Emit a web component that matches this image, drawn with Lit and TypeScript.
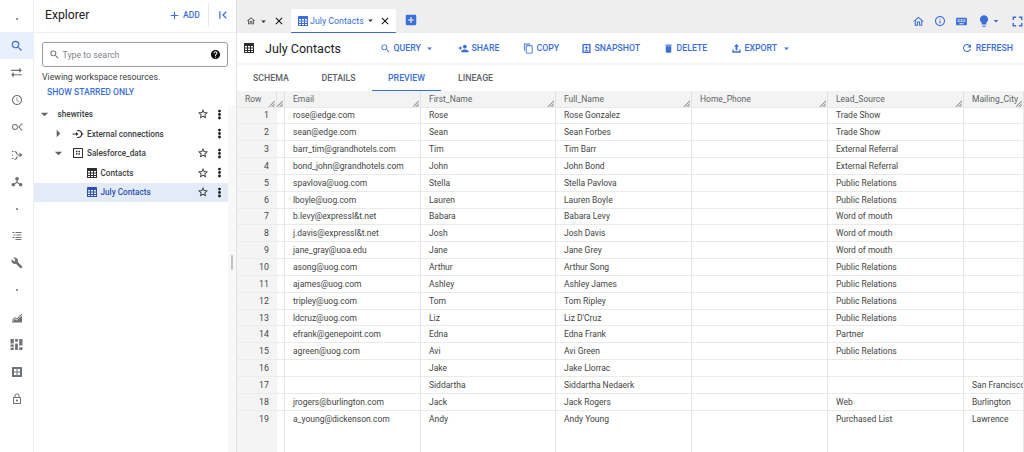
import { LitElement, html, css, svg } from "lit";
import { customElement } from "lit/decorators.js";

const P: Record<string, string> = {
  search: "M15.5 14h-.79l-.28-.27A6.471 6.471 0 0 0 16 9.5 6.5 6.5 0 1 0 9.5 16c1.61 0 3.09-.59 4.23-1.57l.27.28v.79l5 4.99L20.49 19l-4.99-5zm-6 0C7.01 14 5 11.99 5 9.5S7.01 5 9.5 5 14 7.01 14 9.5 11.99 14 9.5 14z",
  swap: "M2 7h15V3l5 5-5 5V9H2zM22 15H7v-4l-5 5 5 5v-4h15z",
  clock: "M11.99 2C6.47 2 2 6.48 2 12s4.47 10 9.99 10C17.52 22 22 17.52 22 12S17.52 2 11.99 2zM12 20c-4.42 0-8-3.58-8-8s3.58-8 8-8 8 3.58 8 8-3.58 8-8 8zm.5-13H11v6l5.25 3.15.75-1.23-4.5-2.67z",
  dot: "M12 10a2 2 0 1 0 0 4 2 2 0 0 0 0-4z",
  graph: "M8 6a6 6 0 1 0 0 12 6 6 0 0 0 0-12zm0 2a4 4 0 1 1 0 8 4 4 0 0 1 0-8zM13 11h3l4-6h3v2h-2l-3.500 5 3.500 5h2v2h-3l-4-6h-3z",
  transfer: "M2 4h3v2H2zM2 11h2v2H2zM2 18h3v2H2zM7 4c4 0 6 3 6.500 7H11c-.5-3-1.500-5-4-5zM7 20c2.500 0 3.500-2 4-5h2.500c-.5 4-2.500 7-6.500 7zM13 11h4V7l6 5-6 5v-4h-4z",
  tree: "M12 2a3.500 3.500 0 0 1 1.200 6.800V12l4 2.600a3.500 3.500 0 1 1-1.200 1.700L12 13.800l-4 2.500a3.500 3.500 0 1 1-1.200-1.700l4-2.600V8.800A3.500 3.500 0 0 1 12 2z",
  list: "M3 4h4v2H3zM9 4h12v2H9zM5 9h4v2H5zM11 9h10v2H11zM3 14h4v2H3zM9 14h12v2H9zM9 18h12v2H9z",
  wrench: "M22.700 19l-9.100-9.100c.9-2.300.4-5-1.500-6.900-2-2-5-2.400-7.400-1.300L9 6 6 9 1.600 4.700C.4 7.100.9 10.100 2.900 12.100c1.900 1.900 4.600 2.400 6.900 1.500l9.100 9.100c.4.4 1 .4 1.400 0l2.300-2.300c.5-.4.5-1.100.1-1.400z",
  chart: "M2 16l6-6 4 3 5-6 5-4v2.500l-4.500 3.500-5.200 6.500L8 12.500l-6 6zM2 21v-1l6-6 4 3 5-6 5-3v13z",
  dash: "M1 2h6v8H1zM1 12h6v4H1zM1 18h6v4H1zM9.500 2h5v5h-5zM9.500 10h5v12h-5zM17 2h6v12h-6zM17 17h6v5h-6z",
  grid: "M3 2h18a1 1 0 0 1 1 1v18a1 1 0 0 1-1 1H3a1 1 0 0 1-1-1V3a1 1 0 0 1 1-1zm3 4v5h5V6zm7 0v5h5V6zm-7 7v5h5v-5zm7 0v5h5v-5z",
  lock: "M18 8h-1V6c0-2.760-2.240-5-5-5S7 3.240 7 6v2H6c-1.100 0-2 .9-2 2v10c0 1.100.9 2 2 2h12c1.100 0 2-.9 2-2V10c0-1.100-.9-2-2-2zM9 6c0-1.660 1.340-3 3-3s3 1.340 3 3v2H9V6zm9 14H6V10h12v10zm-6-3c1.100 0 2-.9 2-2s-.9-2-2-2-2 .9-2 2 .9 2 2 2z",
  add: "M19 13h-6v6h-2v-6H5v-2h6V5h2v6h6v2z",
  collapse: "M3 3h3v18H3zM21 5.200L18.800 3 9.800 12l9 9 2.200-2.200L14.200 12z",
  star: "M22 9.240l-7.190-.62L12 2 9.190 8.630 2 9.240l5.460 4.730L5.820 21 12 17.270 18.180 21l-1.630-7.030L22 9.240zM12 15.400l-3.760 2.270 1-4.280-3.320-2.880 4.380-.38L12 6.100l1.710 4.040 4.380.38-3.320 2.880 1 4.280L12 15.400z",
  more: "M12 8.200a2.600 2.600 0 1 0 0-5.200 2.600 2.600 0 0 0 0 5.200zm0 1.200a2.600 2.600 0 1 0 0 5.200 2.600 2.600 0 0 0 0-5.200zm0 6.400a2.600 2.600 0 1 0 0 5.200 2.600 2.600 0 0 0 0-5.200z",
  help: "M12 2C6.480 2 2 6.480 2 12s4.480 10 10 10 10-4.480 10-10S17.520 2 12 2zm1 17h-2v-2h2v2zm2.070-7.750l-.9.92C13.450 12.900 13 13.500 13 15h-2v-.5c0-1.100.45-2.100 1.170-2.830l1.240-1.260c.37-.36.59-.86.59-1.410 0-1.100-.9-2-2-2s-2 .9-2 2H8c0-2.210 1.790-4 4-4s4 1.790 4 4c0 .88-.36 1.680-.93 2.250z",
  close: "M19 6.410L17.590 5 12 10.590 6.410 5 5 6.410 10.590 12 5 17.590 6.410 19 12 13.410 17.590 19 19 17.590 13.410 12z",
  home: "M12 5.690l5 4.500V18h-2v-6H9v6H7v-7.810l5-4.500M12 3L2 12h3v8h6v-6h2v6h6v-8h3L12 3z",
  info: "M11 7h2v2h-2zm0 4h2v6h-2zm1-9C6.480 2 2 6.480 2 12s4.480 10 10 10 10-4.480 10-10S17.520 2 12 2zm0 18c-4.410 0-8-3.590-8-8s3.590-8 8-8 8 3.590 8 8-3.590 8-8 8z",
  keyboard: "M20 5H4c-1.100 0-1.990.9-1.990 2L2 17c0 1.100.9 2 2 2h16c1.100 0 2-.9 2-2V7c0-1.100-.9-2-2-2zm-9 3h2v2h-2V8zm0 3h2v2h-2v-2zM8 8h2v2H8V8zm0 3h2v2H8v-2zm-1 2H5v-2h2v2zm0-3H5V8h2v2zm9 7H8v-2h8v2zm0-4h-2v-2h2v2zm0-3h-2V8h2v2zm3 3h-2v-2h2v2zm0-3h-2V8h2v2z",
  bulb: "M9 21c0 .55.45 1 1 1h4c.55 0 1-.45 1-1v-1H9v1zm3-19C8.140 2 5 5.140 5 9c0 2.380 1.190 4.470 3 5.740V17c0 .55.45 1 1 1h6c.55 0 1-.45 1-1v-2.260c1.810-1.270 3-3.360 3-5.740 0-3.860-3.140-7-7-7z",
  full: "M7 14H5v5h5v-2H7v-3zm-2-4h2V7h3V5H5v5zm12 7h-3v2h5v-5h-2v3zM14 5v2h3v3h2V5h-5z",
  person: "M15 12c2.210 0 4-1.790 4-4s-1.790-4-4-4-4 1.790-4 4 1.790 4 4 4zm-9-2V7H4v3H1v2h3v3h2v-3h3v-2H6zm9 4c-2.670 0-8 1.340-8 4v2h16v-2c0-2.660-5.330-4-8-4z",
  copy: "M16 1H4c-1.100 0-2 .9-2 2v14h2V3h12V1zm3 4H8c-1.100 0-2 .9-2 2v14c0 1.100.9 2 2 2h11c1.100 0 2-.9 2-2V7c0-1.100-.9-2-2-2zm0 16H8V7h11v14z",
  snapshot: "M5 2h14a2 2 0 0 1 2 2v16a2 2 0 0 1-2 2H5a2 2 0 0 1-2-2V4a2 2 0 0 1 2-2zm1 3v14h12V5zm5 1.500h2v3h3v2h-3v3h-2v-3H8v-2h3zM8 16h8v2H8z",
  del: "M6 19c0 1.100.9 2 2 2h8c1.100 0 2-.9 2-2V7H6v12zM19 4h-3.500l-1-1h-5l-1 1H5v2h14V4z",
  export: "M12 2L6.500 8H10v8h4V8h3.500zM3 14h3v4h12v-4h3v7H3z",
  refresh: "M17.650 6.350C16.200 4.900 14.210 4 12 4c-4.420 0-7.990 3.580-7.990 8s3.570 8 7.990 8c3.730 0 6.840-2.550 7.730-6h-2.080c-.82 2.330-3.040 4-5.650 4-3.310 0-6-2.690-6-6s2.690-6 6-6c1.660 0 3.140.69 4.220 1.780L13 11h7V4l-2.350 2.350z",
  addbox: "M19 3H5c-1.110 0-2 .9-2 2v14c0 1.100.89 2 2 2h14c1.100 0 2-.9 2-2V5c0-1.100-.9-2-2-2zm-2 10h-4v4h-2v-4H7v-2h4V7h2v4h4v2z",
  drop: "M7 10l5 5 5-5z",
  right: "M8 4l8 8-8 8z",
  down: "M4 8h16l-8 8z",
  table: "M3 2h18a1 1 0 0 1 1 1v18a1 1 0 0 1-1 1H3a1 1 0 0 1-1-1V3a1 1 0 0 1 1-1zm1 6v3h4V8zm6 0v3h4V8zm6 0v3h4V8zM4 13v3h4v-3zm6 0v3h4v-3zm6 0v3h4v-3zM4 18v2h4v-2zm6 0v2h4v-2zm6 0v2h4v-2z",
  dataset: "M3 2h18a1 1 0 0 1 1 1v18a1 1 0 0 1-1 1H3a1 1 0 0 1-1-1V3a1 1 0 0 1 1-1zm1 2v16h16V4zm4 3.500h3v3H8zm5 0h3v3h-3zm-5 5h3v3H8zm5 0h3v3h-3z",
  ext: "M1 11h7v-3l5 4-5 4v-3H1zM10 4.500A8 8 0 1 1 10 19.500v-2.200A5.800 5.800 0 1 0 10 6.700zM19 11h4v2h-4z",
  resize: "M11 23L23 11v3l-9 9zM17 23l6-6v2.500L19.500 23zM2 23L23 2v3L5 23z",
};
const ico = (n: string, cls = "") =>
  html`<svg class="i ${cls}" viewBox="0 0 24 24" aria-hidden="true">${svg`<path d=${P[n]}></path>`}</svg>`;

const rows: [string, string, string, string][] = [
  ["rose@edge.com", "Rose", "Rose Gonzalez", "Trade Show"],
  ["sean@edge.com", "Sean", "Sean Forbes", "Trade Show"],
  ["barr_tim@grandhotels.com", "Tim", "Tim Barr", "External Referral"],
  ["bond_john@grandhotels.com", "John", "John Bond", "External Referral"],
  ["spavlova@uog.com", "Stella", "Stella Pavlova", "Public Relations"],
  ["lboyle@uog.com", "Lauren", "Lauren Boyle", "Public Relations"],
  ["b.levy@expressl&t.net", "Babara", "Babara Levy", "Word of mouth"],
  ["j.davis@expressl&t.net", "Josh", "Josh Davis", "Word of mouth"],
  ["jane_gray@uoa.edu", "Jane", "Jane Grey", "Word of mouth"],
  ["asong@uog.com", "Arthur", "Arthur Song", "Public Relations"],
  ["ajames@uog.com", "Ashley", "Ashley James", "Public Relations"],
  ["tripley@uog.com", "Tom", "Tom Ripley", "Public Relations"],
  ["ldcruz@uog.com", "Liz", "Liz D'Cruz", "Public Relations"],
  ["efrank@genepoint.com", "Edna", "Edna Frank", "Partner"],
  ["agreen@uog.com", "Avi", "Avi Green", "Public Relations"],
  ["", "Jake", "Jake Llorrac", ""],
  ["", "Siddartha", "Siddartha Nedaerk", ""],
  ["jrogers@burlington.com", "Jack", "Jack Rogers", "Web"],
  ["a_young@dickenson.com", "Andy", "Andy Young", "Purchased List"],
];
const cities: Record<number, string> = { 16: "San Francisco", 17: "Burlington", 18: "Lawrence" };
const railItems = ["dot", "search", "swap", "clock", "graph", "transfer", "tree", "dot", "list", "wrench", "dot", "chart", "dash", "grid", "lock"];
const heads = ["Email", "First_Name", "Full_Name", "Home_Phone", "Lead_Source", "Mailing_City"];

@customElement("app-root")
export class AppRoot extends LitElement {
  static styles = css`
    :host { display: flex; width: 1024px; height: 452px; overflow: hidden; background: #fff; font-family: Roboto, "Liberation Sans", sans-serif; color: #3c4043; }
    * { box-sizing: border-box; }
    .i { display: block; width: 12px; height: 12px; fill: currentColor; flex: none; }
    .rail { width: 34px; flex: none; border-right: 1px solid #eceff1; padding-top: 5px; color: #6f7275; }
    .rail div { height: 27.200px; display: flex; align-items: center; justify-content: center; }
    .rail div .i { width: 12px; height: 12px; }
    .rail .on { background: #e8f0fe; color: #3b6fd8; }
    .rail div .search { width: 14px; height: 14px; }
    .rail div .big { width: 13px; height: 13px; }
    .panel { width: 203px; flex: none; display: flex; flex-direction: column; border-right: 1px solid #e3e3e3; }
    .phead { height: 33px; flex: none; display: flex; align-items: center; padding-left: 11px; border-bottom: 1px solid #f1f1f1; padding-bottom: 2px; }
    .phead h1 { margin: 0; flex: 1; font-size: 12.200px; font-weight: 400; color: #202124; }
    .add { display: flex; align-items: center; gap: 2px; color: #3b6fd8; font-size: 8.500px; font-weight: 500; width: 40px; }
    .add .i { width: 13px; height: 13px; }
    .vsep { width: 1px; height: 24px; background: #e8e8e8; margin-right: 9px; }
    .phead .col { color: #3b6fd8; width: 10px; height: 10px; margin-right: 8px; }
    .pbody { flex: 1; display: flex; min-height: 0; }
    .pcontent { width: 194px; flex: none; padding-top: 9px; }
    .strip { flex: 1; margin-top: 72px; background: #f8f8f8; display: flex; justify-content: center; }
    .thumb { width: 2px; height: 15px; margin-top: 150px; background: #c4c4c4; border-radius: 1px; }
    .box { margin-left: 8px; width: 186px; height: 25px; border: 1px solid #9a9a9a; border-radius: 3px; display: flex; align-items: center; padding: 0 6px 0 6px; font-size: 8.750px; color: #80868b; gap: 2.500px; }
    .box span { flex: 1; }
    .box .i { width: 11px; height: 11px; color: #5f6368; }
    .box .h { color: #111; width: 11px; height: 11px; }
    .view { margin: 4px 0 0 8px; font-size: 8.750px; color: #3c4043; line-height: 13px; }
    .star { margin: 2px 0 0 13px; font-size: 8.600px; font-weight: 500; color: #3b6fd8; line-height: 12px; }
    .tree { margin-top: 6.500px; }
    .row { height: 19.500px; display: flex; align-items: center; font-size: 8.200px; font-weight: 500; color: #3c4043; }
    .row.sel { background: #e3ebf9; color: #2f4fb0; }
    .row .name { flex: 1; white-space: nowrap; }
    .row .s { width: 12px; height: 12px; color: #2a2a2a; margin-right: 3.500px; }
    .row .m { width: 13px; height: 13px; color: #1c1c1c; margin-right: 2.500px; }
    .row .no { width: 15.500px; }
    .row .arrow { width: 11px; height: 11px; color: #5f6368; }
    .row .t { width: 12px; height: 12px; color: #2e2e2e; margin-right: 3px; }
    .row.sel .t { color: #2f4fb0; }
    .row .gap { flex: none; width: 8px; }
    .l0 { padding-left: 4.500px; }
    .l1a { padding-left: 19px; }
    .l1 { padding-left: 19px; }
    .l2 { padding-left: 51.500px; }
    .main { flex: 1; min-width: 0; display: flex; flex-direction: column; }
    .tabs { height: 33px; flex: none; background: #eee; display: flex; align-items: flex-end; }
    .home { display: flex; align-items: center; height: 24px; width: 54px; padding-left: 9px; color: #4a4a4a; }
    .home .hm { width: 10px; height: 10px; }
    .home .a { width: 11px; height: 11px; margin: 0 3.500px 0 2px; color: #333; }
    .x { width: 12px; height: 12px; color: #111; }
    .tab { width: 105px; height: 24px; background: #fff; border-bottom: 1.500px solid #3b6fd8; display: flex; align-items: center; padding-left: 6px; font-size: 8.850px; color: #3b6fd8; border-radius: 2px 2px 0 0; white-space: nowrap; }
    .tab .tb { width: 12px; height: 12px; margin-right: 1px; }
    .tab .a { width: 11px; height: 11px; color: #333; margin: 0 2.500px 0 1.500px; }
    .plus { color: #3b6fd8; width: 14px; height: 14px; margin: 0 0 6px 7.500px; }
    .tools { margin-left: auto; display: flex; align-items: center; height: 24px; color: #3b6fd8; margin-right: -1.500px; }
    .tools .i1 { width: 13px; height: 13px; }
    .tools .i2 { width: 12px; height: 12px; margin-left: 9px; }
    .tools .i3 { width: 13px; height: 13px; margin-left: 9px; }
    .tools .i4 { width: 14px; height: 14px; margin-left: 9px; }
    .tools .i5 { width: 12px; height: 12px; margin-left: -1px; }
    .tools .i6 { width: 17px; height: 17px; margin-left: 7px; }
    .bar { height: 32px; flex: none; display: flex; align-items: center; padding-left: 6px; color: #3b6fd8; border-bottom: 2px solid #f4f4f4; font-size: 8.750px; font-weight: 500; }
    .bar .ti { width: 12px; height: 12px; color: #2c2c2c; margin-right: 10px; }
    .bar h2 { margin: 0; width: 115px; font-size: 12.500px; font-weight: 400; color: #202124; white-space: nowrap; }
    .btn { display: flex; align-items: center; gap: 2.500px; white-space: nowrap; }
    .btn .i { width: 11px; height: 11px; }
    .btn .a { width: 11px; height: 11px; margin-left: 1px; }
    .ref { margin-left: auto; margin-right: 11px; }
    .ref .i { width: 12px; height: 12px; }
    .sub { height: 26px; flex: none; display: flex; align-items: stretch; font-size: 8.800px; font-weight: 500; color: #5f6368; }
    .sub div { display: flex; align-items: center; justify-content: center; border-bottom: 1.500px solid transparent; }
    .sub .on { color: #3b6fd8; border-bottom-color: #3b6fd8; }
    .grid { flex: 1; min-height: 0; overflow: hidden; display: grid; grid-template-columns: 40px 8px 136px 135px 136px 136px 136px 60px; grid-template-rows: 16.500px repeat(19, 16.850px) 1fr; font-size: 8.500px; color: #444; width: 787px; }
    .cell { display: flex; align-items: center; padding-left: 8px; white-space: nowrap; overflow: hidden; border-bottom: 1px solid #eaeaea; border-right: 1px solid #e6e6e6; }
    .hd { background: #f3f3f3; color: #5f6368; position: relative; border-bottom: 1px solid #e8e8e8; border-right: 1px solid #e3e3e3; }
    .hd .rs { position: absolute; right: 1px; bottom: 0; width: 7px; height: 7px; color: #666; }
    .n { background: #f4f4f4; justify-content: flex-end; padding: 0 8px 0 0; color: #444; border-right: none; font-size: 8.800px; border-bottom-color: #ececec; }
    .gut { padding: 0; }
    .last { border-bottom-color: transparent; }
    .fill-n { background: #f4f4f4; }
    .empty { border-right: 1px solid #e6e6e6; }
  `;

  private btn(icon: string, label: string, width: number, drop = false) {
    return html`<div class="btn" style="width:${width}px">${ico(icon)}<span>${label}</span>${drop ? ico("drop", "a") : ""}</div>`;
  }

  render() {
    return html`
      <nav class="rail">
        ${railItems.map((n, i) => html`<div class=${i === 1 ? "on" : ""}>${ico(n, n === "search" ? "search" : n === "dash" || n === "swap" ? "big" : "")}</div>`)}
      </nav>
      <aside class="panel">
        <header class="phead">
          <h1>Explorer</h1>
          <div class="add">${ico("add")}<span>ADD</span></div>
          <div class="vsep"></div>
          ${ico("collapse", "col")}
        </header>
        <div class="pbody">
          <div class="pcontent">
            <div class="box">${ico("search")}<span>Type to search</span>${ico("help", "h")}</div>
            <div class="view">Viewing workspace resources.</div>
            <div class="star">SHOW STARRED ONLY</div>
            <div class="tree">
              <div class="row l0">${ico("down", "arrow")}<span class="gap"></span><span class="name">shewrites</span>${ico("star", "s")}${ico("more", "m")}</div>
              <div class="row l1a">${ico("right", "arrow")}<span class="gap"></span>${ico("ext", "t")}<span class="name">External connections</span><span class="no"></span>${ico("more", "m")}</div>
              <div class="row l1">${ico("down", "arrow")}<span class="gap"></span>${ico("dataset", "t")}<span class="name">Salesforce_data</span>${ico("star", "s")}${ico("more", "m")}</div>
              <div class="row l2">${ico("table", "t")}<span class="name">Contacts</span>${ico("star", "s")}${ico("more", "m")}</div>
              <div class="row l2 sel">${ico("table", "t")}<span class="name">July Contacts</span>${ico("star", "s")}${ico("more", "m")}</div>
            </div>
          </div>
          <div class="strip"><div class="thumb"></div></div>
        </div>
      </aside>
      <main class="main">
        <div class="tabs">
          <div class="home">${ico("home", "hm")}${ico("drop", "a")}${ico("close", "x")}</div>
          <div class="tab">${ico("table", "tb")}<span>July Contacts</span>${ico("drop", "a")}${ico("close", "x")}</div>
          ${ico("addbox", "plus")}
          <div class="tools">
            ${ico("home", "i1")}${ico("info", "i2")}${ico("keyboard", "i3")}${ico("bulb", "i4")}${ico("drop", "i5")}${ico("full", "i6")}
          </div>
        </div>
        <div class="bar">
          ${ico("table", "ti")}
          <h2>July Contacts</h2>
          ${this.btn("search", "QUERY", 78, true)}
          ${this.btn("person", "SHARE", 65)}
          ${this.btn("copy", "COPY", 58)}
          ${this.btn("snapshot", "SNAPSHOT", 82)}
          ${this.btn("del", "DELETE", 68)}
          ${this.btn("export", "EXPORT", 70, true)}
          <div class="btn ref">${ico("refresh")}<span>REFRESH</span></div>
        </div>
        <div class="sub">
          <div style="width:68px">SCHEMA</div>
          <div style="width:67px">DETAILS</div>
          <div class="on" style="width:69px">PREVIEW</div>
          <div style="width:69px">LINEAGE</div>
        </div>
        <div class="grid">
          <div class="cell hd">Row${ico("resize", "rs")}</div>
          <div class="cell hd gut">${ico("resize", "rs")}</div>
          ${heads.map((h) => html`<div class="cell hd">${h}${ico("resize", "rs")}</div>`)}
          ${rows.map((r, i) => {
            const l = i === rows.length - 1 ? "last" : "";
            return html`
              <div class="cell n ${l}">${i + 1}</div>
              <div class="cell gut ${l}"></div>
              <div class="cell ${l}">${r[0]}</div>
              <div class="cell ${l}">${r[1]}</div>
              <div class="cell ${l}">${r[2]}</div>
              <div class="cell ${l}"></div>
              <div class="cell ${l}">${r[3]}</div>
              <div class="cell ${l}">${cities[i] ?? ""}</div>
            `;
          })}
          <div class="fill-n"></div>
          <div class="empty"></div>
          <div class="empty"></div><div class="empty"></div><div class="empty"></div><div class="empty"></div><div class="empty"></div><div class="empty"></div>
        </div>
      </main>
    `;
  }
}
